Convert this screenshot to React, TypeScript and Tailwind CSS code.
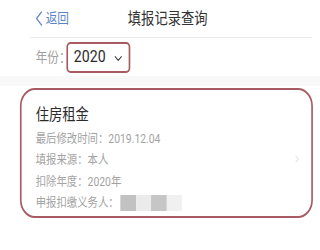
import { ChevronDown, ChevronRight } from "lucide-react"

const rows = [
    { label: "最后修改时间：", value: "2019.12.04" },
    { label: "填报来源：", value: "本人" },
    { label: "扣除年度：", value: "2020年" },
]

export default function App() {
    return <div className="w-[320px] h-[250px] overflow-hidden bg-white">
        {/* the screenshot is squeezed sideways, so the page is laid out wider and scaled down */}
        <div
            className="w-[386px] h-[250px] origin-top-left scale-x-[0.83] flex flex-col"
            style={{ fontFamily: "Roboto, 'Noto Sans CJK SC', sans-serif" }}
        >
            <div className="h-[37px] flex items-center relative">
                <div className="pl-[43px] flex items-center text-[#5a84c8]">
                    <svg width="8" height="15" viewBox="0 0 8 15" fill="none" stroke="currentColor" strokeWidth="1.3" strokeLinecap="round" strokeLinejoin="round">
                        <path d="M7 1 1 7.5 7 14" />
                    </svg>
                    <span className="text-[14px] ml-[4px]">返回</span>
                </div>
                <p className="absolute left-[154px] w-[96px] text-center text-[16px] text-[#333]">填报记录查询</p>
            </div>
            <div className="ml-[36px] mr-[10px] h-px bg-[#ececec]" />
            <div className="h-[38px] flex items-center pl-[43px]">
                <span className="text-[14px] text-[#a0a0a0]">年份：</span>
                <div className="ml-[-5px] h-[31px] w-[77px] border-2 border-[#a65c62] rounded-[5px] flex items-center pl-[7px] gap-[8px]">
                    <span className="text-[17px] text-[#2a2a2a]">2020</span>
                    <ChevronDown className="w-[15px] h-[15px] text-[#333] mt-[2px]" strokeWidth={1.8} />
                </div>
            </div>
            <div className="h-[10px] bg-[#f8f8f8]" />
            <div className="mt-[2px] ml-[24px] w-[353px] h-[130px] border-2 border-[#a65c62] rounded-[18px] pl-[17px] pr-[11px] pt-[14px] flex">
                <div className="grow flex flex-col">
                    <p className="text-[16px] leading-[22px] text-[#2b2b2b]">住房租金</p>
                    <div className="mt-[2px] flex flex-col text-[12.5px] leading-[21.3px] text-[#a3a3a3]">
                        {rows.map(r => <p key={r.label}>{r.label}{r.value}</p>)}
                        <p className="flex items-center">
                            申报扣缴义务人：
                            <span className="ml-[2px] flex h-[16px]">
                                <span className="w-[19px] bg-[#c2c2c2]" />
                                <span className="w-[18px] bg-[#ebebeb]" />
                                <span className="w-[19px] bg-[#c6c6c6]" />
                                <span className="w-[18px] bg-[#f0f0f0]" />
                            </span>
                        </p>
                    </div>
                </div>
                <ChevronRight className="self-center mt-[-2px] w-[12px] h-[12px] text-[#c8c8c8]" strokeWidth={1.5} />
            </div>
        </div>
    </div>
}
